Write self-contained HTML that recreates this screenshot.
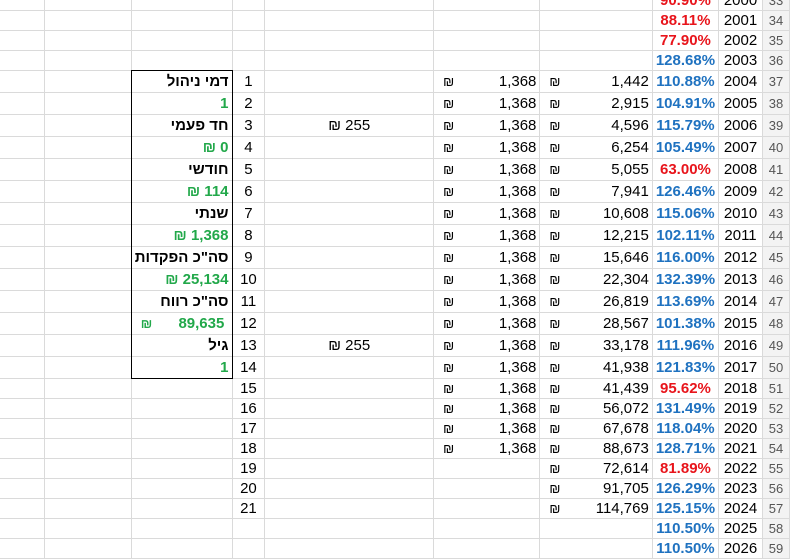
<!DOCTYPE html>
<html><head><meta charset="utf-8"><style>
body{margin:0;width:791px;height:550px;overflow:hidden;background:#fff;font-family:"Liberation Sans",Arial,sans-serif;font-size:15px;position:relative}
table{position:absolute;left:-1px;top:-10px;border-collapse:collapse;table-layout:fixed}
td{border:1px solid #dadada;padding:0 3px;white-space:nowrap;overflow:hidden;line-height:18px;color:#000}
tr.a td{height:19px}tr.b td{height:21px}
td.n{text-align:center}
td.l{text-align:right;font-weight:bold;direction:rtl}
td.g{text-align:right;font-weight:bold;color:#22a84a}
td.s{text-align:center}
td.m{text-align:right}
td.m span{float:left;font-size:13px;padding-left:6px}
td.p{text-align:center;font-weight:bold;color:#1f72c0}
td.r{color:#e8141b}
td.y{text-align:center}
td.h{background:#f3f3f3;color:#555;text-align:center;font-size:13px;border-left:1px solid #bdbdbd}
.box{position:absolute;left:131px;top:70px;width:100px;height:307px;border:1px solid #000}
</style></head><body>
<table>
<colgroup><col style="width:45px"><col style="width:88px"><col style="width:100px"><col style="width:33px"><col style="width:170px"><col style="width:107px"><col style="width:113px"><col style="width:65px"><col style="width:44px"><col style="width:27px"></colgroup>
<tr class="a"><td></td><td></td><td></td><td></td><td></td><td></td><td></td><td class="p r">90.90%</td><td class="y">2000</td><td class="h">33</td></tr>
<tr class="a"><td></td><td></td><td></td><td></td><td></td><td></td><td></td><td class="p r">88.11%</td><td class="y">2001</td><td class="h">34</td></tr>
<tr class="a"><td></td><td></td><td></td><td></td><td></td><td></td><td></td><td class="p r">77.90%</td><td class="y">2002</td><td class="h">35</td></tr>
<tr class="a"><td></td><td></td><td></td><td></td><td></td><td></td><td></td><td class="p">128.68%</td><td class="y">2003</td><td class="h">36</td></tr>
<tr class="b"><td></td><td></td><td class="l">דמי ניהול</td><td class="n">1</td><td></td><td class="m"><span>₪</span>1,368</td><td class="m"><span>₪</span>1,442</td><td class="p">110.88%</td><td class="y">2004</td><td class="h">37</td></tr>
<tr class="b"><td></td><td></td><td class="g">1</td><td class="n">2</td><td></td><td class="m"><span>₪</span>1,368</td><td class="m"><span>₪</span>2,915</td><td class="p">104.91%</td><td class="y">2005</td><td class="h">38</td></tr>
<tr class="b"><td></td><td></td><td class="l">חד פעמי</td><td class="n">3</td><td class="s">₪ 255</td><td class="m"><span>₪</span>1,368</td><td class="m"><span>₪</span>4,596</td><td class="p">115.79%</td><td class="y">2006</td><td class="h">39</td></tr>
<tr class="b"><td></td><td></td><td class="g">₪ 0</td><td class="n">4</td><td></td><td class="m"><span>₪</span>1,368</td><td class="m"><span>₪</span>6,254</td><td class="p">105.49%</td><td class="y">2007</td><td class="h">40</td></tr>
<tr class="b"><td></td><td></td><td class="l">חודשי</td><td class="n">5</td><td></td><td class="m"><span>₪</span>1,368</td><td class="m"><span>₪</span>5,055</td><td class="p r">63.00%</td><td class="y">2008</td><td class="h">41</td></tr>
<tr class="b"><td></td><td></td><td class="g">₪ 114</td><td class="n">6</td><td></td><td class="m"><span>₪</span>1,368</td><td class="m"><span>₪</span>7,941</td><td class="p">126.46%</td><td class="y">2009</td><td class="h">42</td></tr>
<tr class="b"><td></td><td></td><td class="l">שנתי</td><td class="n">7</td><td></td><td class="m"><span>₪</span>1,368</td><td class="m"><span>₪</span>10,608</td><td class="p">115.06%</td><td class="y">2010</td><td class="h">43</td></tr>
<tr class="b"><td></td><td></td><td class="g">₪ 1,368</td><td class="n">8</td><td></td><td class="m"><span>₪</span>1,368</td><td class="m"><span>₪</span>12,215</td><td class="p">102.11%</td><td class="y">2011</td><td class="h">44</td></tr>
<tr class="b"><td></td><td></td><td class="l">סה"כ הפקדות</td><td class="n">9</td><td></td><td class="m"><span>₪</span>1,368</td><td class="m"><span>₪</span>15,646</td><td class="p">116.00%</td><td class="y">2012</td><td class="h">45</td></tr>
<tr class="b"><td></td><td></td><td class="g">₪ 25,134</td><td class="n">10</td><td></td><td class="m"><span>₪</span>1,368</td><td class="m"><span>₪</span>22,304</td><td class="p">132.39%</td><td class="y">2013</td><td class="h">46</td></tr>
<tr class="b"><td></td><td></td><td class="l">סה"כ רווח</td><td class="n">11</td><td></td><td class="m"><span>₪</span>1,368</td><td class="m"><span>₪</span>26,819</td><td class="p">113.69%</td><td class="y">2014</td><td class="h">47</td></tr>
<tr class="b"><td></td><td></td><td class="g"><span style="float:left;font-size:13px;padding-left:6px">₪</span>89,635&nbsp;</td><td class="n">12</td><td></td><td class="m"><span>₪</span>1,368</td><td class="m"><span>₪</span>28,567</td><td class="p">101.38%</td><td class="y">2015</td><td class="h">48</td></tr>
<tr class="b"><td></td><td></td><td class="l">גיל</td><td class="n">13</td><td class="s">₪ 255</td><td class="m"><span>₪</span>1,368</td><td class="m"><span>₪</span>33,178</td><td class="p">111.96%</td><td class="y">2016</td><td class="h">49</td></tr>
<tr class="b"><td></td><td></td><td class="g">1</td><td class="n">14</td><td></td><td class="m"><span>₪</span>1,368</td><td class="m"><span>₪</span>41,938</td><td class="p">121.83%</td><td class="y">2017</td><td class="h">50</td></tr>
<tr class="a"><td></td><td></td><td></td><td class="n">15</td><td></td><td class="m"><span>₪</span>1,368</td><td class="m"><span>₪</span>41,439</td><td class="p r">95.62%</td><td class="y">2018</td><td class="h">51</td></tr>
<tr class="a"><td></td><td></td><td></td><td class="n">16</td><td></td><td class="m"><span>₪</span>1,368</td><td class="m"><span>₪</span>56,072</td><td class="p">131.49%</td><td class="y">2019</td><td class="h">52</td></tr>
<tr class="a"><td></td><td></td><td></td><td class="n">17</td><td></td><td class="m"><span>₪</span>1,368</td><td class="m"><span>₪</span>67,678</td><td class="p">118.04%</td><td class="y">2020</td><td class="h">53</td></tr>
<tr class="a"><td></td><td></td><td></td><td class="n">18</td><td></td><td class="m"><span>₪</span>1,368</td><td class="m"><span>₪</span>88,673</td><td class="p">128.71%</td><td class="y">2021</td><td class="h">54</td></tr>
<tr class="a"><td></td><td></td><td></td><td class="n">19</td><td></td><td></td><td class="m"><span>₪</span>72,614</td><td class="p r">81.89%</td><td class="y">2022</td><td class="h">55</td></tr>
<tr class="a"><td></td><td></td><td></td><td class="n">20</td><td></td><td></td><td class="m"><span>₪</span>91,705</td><td class="p">126.29%</td><td class="y">2023</td><td class="h">56</td></tr>
<tr class="a"><td></td><td></td><td></td><td class="n">21</td><td></td><td></td><td class="m"><span>₪</span>114,769</td><td class="p">125.15%</td><td class="y">2024</td><td class="h">57</td></tr>
<tr class="a"><td></td><td></td><td></td><td></td><td></td><td></td><td></td><td class="p">110.50%</td><td class="y">2025</td><td class="h">58</td></tr>
<tr class="a"><td></td><td></td><td></td><td></td><td></td><td></td><td></td><td class="p">110.50%</td><td class="y">2026</td><td class="h">59</td></tr>
</table>
<div class="box"></div>
</body></html>
